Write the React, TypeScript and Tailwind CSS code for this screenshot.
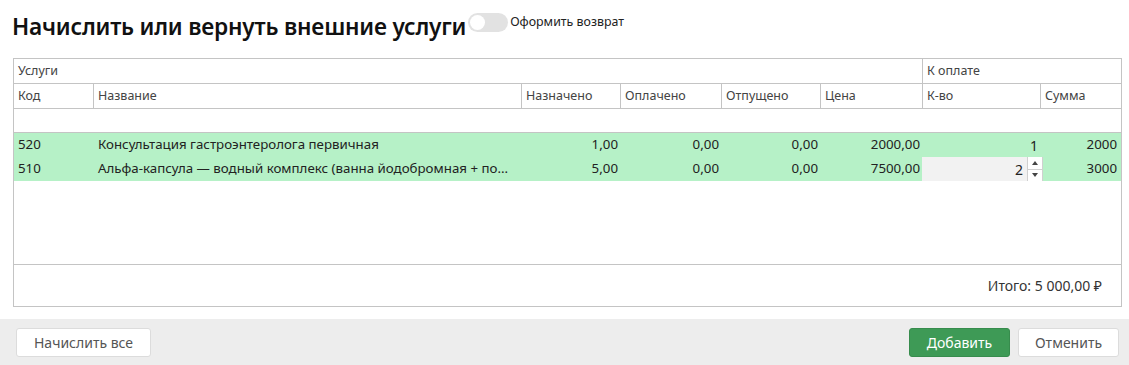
const cols = 'grid grid-cols-[80px_428px_99px_101px_99px_102px_118px_1fr]';

const rows = [
  { code: '520', name: 'Консультация гастроэнтеролога первичная', assigned: '1,00', paid: '0,00', issued: '0,00', price: '2000,00', qty: '1', sum: '2000', editing: false },
  { code: '510', name: 'Альфа-капсула — водный комплекс (ванна йодобромная + по...', assigned: '5,00', paid: '0,00', issued: '0,00', price: '7500,00', qty: '2', sum: '3000', editing: true },
];

const headers = ['Код', 'Название', 'Назначено', 'Оплачено', 'Отпущено', 'Цена', 'К-во', 'Сумма'];

const App = () => {
  return (
    <div className="w-[1129px] h-[365px] bg-white flex flex-col text-[#333] font-['Noto_Sans',sans-serif] overflow-hidden">
      <div className="flex items-center h-[30px] mt-[12px] pl-[12px]">
        <h1 className="text-[22.7px] font-semibold text-[#111] leading-none tracking-[-0.2px]">Начислить или вернуть внешние услуги</h1>
        <div className="ml-[2px] -mt-[10px] flex items-center">
          <div className="w-[40px] h-[19px] rounded-full bg-[#e2e2e2] flex items-center px-[2px]">
            <div className="w-[15px] h-[15px] rounded-full bg-white" />
          </div>
          <span className="ml-[2px] text-[12.4px] text-[#222]">Оформить возврат</span>
        </div>
      </div>

      <div className="ml-[13px] mr-[7px] mt-[16px] h-[249px] border border-[#c4c4c4] flex flex-col text-[12.5px]">
        <div className="grid grid-cols-[909px_1fr] h-[25px] border-b border-[#c4c4c4] text-[#444]">
          <div className="border-r border-[#c4c4c4] pl-[4px] flex items-center">Услуги</div>
          <div className="pl-[4px] flex items-center">К оплате</div>
        </div>
        <div className={`${cols} h-[25px] border-b border-[#c4c4c4] text-[#444]`}>
          {headers.map((h, i) => (
            <div key={h} className={`pl-[4px] flex items-center ${i < 7 ? 'border-r border-[#c4c4c4]' : ''}`}>{h}</div>
          ))}
        </div>
        <div className="h-[24px] border-b border-[#c4c4c4]" />

        {rows.map((r) => (
          <div key={r.code} className={`${cols} h-[24px] bg-[#b6f1c7] text-[#222] text-[13.3px]`}>
            <div className="pl-[4px] flex items-center">{r.code}</div>
            <div className="pl-[4px] flex items-center whitespace-nowrap overflow-hidden">{r.name}</div>
            <div className="pr-[3px] flex items-center justify-end">{r.assigned}</div>
            <div className="pr-[3px] flex items-center justify-end">{r.paid}</div>
            <div className="pr-[3px] flex items-center justify-end">{r.issued}</div>
            <div className="pr-[3px] flex items-center justify-end">{r.price}</div>
            {r.editing ? (
              <div className="flex items-stretch -ml-px w-[121px]">
                <div className="w-[105px] bg-[#f2f2f2] flex items-center justify-end pr-[4px] text-[14px]">{r.qty}</div>
                <div className="w-[16px] flex flex-col border-x border-[#d0d0d0] bg-white">
                  <div className="flex-1 flex items-center justify-center border-b border-[#d0d0d0]">
                    <div className="w-0 h-0 border-x-[3px] border-x-transparent border-b-[4px] border-b-[#444]" />
                  </div>
                  <div className="flex-1 flex items-center justify-center">
                    <div className="w-0 h-0 border-x-[3px] border-x-transparent border-t-[4px] border-t-[#444]" />
                  </div>
                </div>
              </div>
            ) : (
              <div className="pr-[3px] flex items-center justify-end text-[14px]">{r.qty}</div>
            )}
            <div className="pr-[4px] flex items-center justify-end">{r.sum}</div>
          </div>
        ))}

        <div className="flex-1" />
        <div className="h-[42px] border-t border-[#c4c4c4] flex items-center justify-end pr-[19px] text-[14px] text-[#333]">
          Итого: 5 000,00 ₽
        </div>
      </div>

      <div className="mt-[12px] flex-1 bg-[#ededed] flex items-center justify-between px-[16px] pr-[10px]">
        <button className="w-[135px] h-[29px] bg-white border border-[#dcdcdc] rounded-[3px] text-[14px] text-[#555]">Начислить все</button>
        <div className="flex gap-[8px]">
          <button className="w-[101px] h-[29px] bg-[#3e9a56] border border-[#378c4d] rounded-[3px] text-[14px] text-white">Добавить</button>
          <button className="w-[101px] h-[29px] bg-white border border-[#dcdcdc] rounded-[3px] text-[14px] text-[#555]">Отменить</button>
        </div>
      </div>
    </div>
  );
};

export default App;
